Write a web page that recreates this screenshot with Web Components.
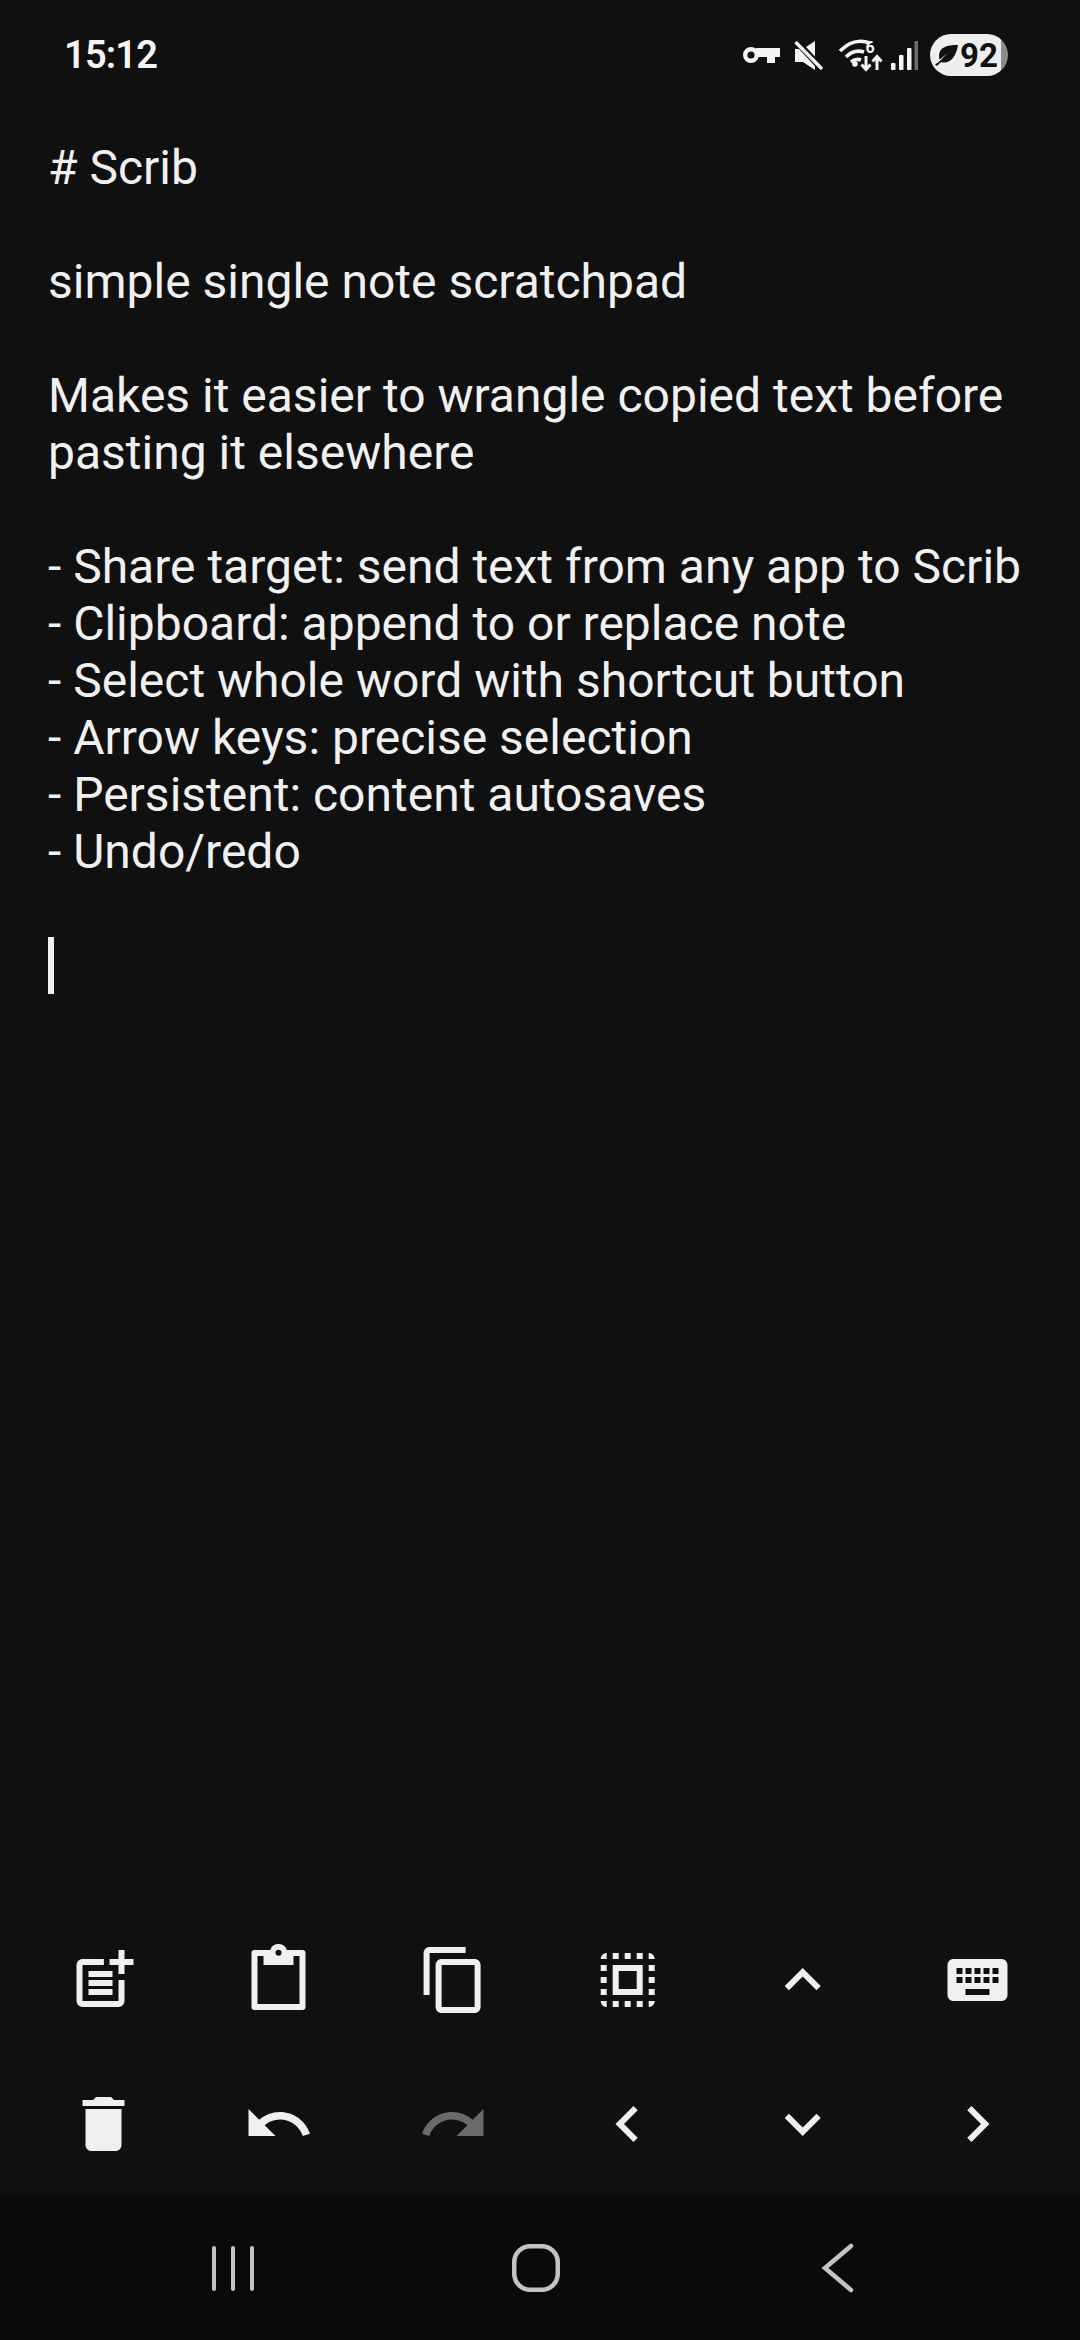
<!DOCTYPE html>
<html>
<head>
<meta charset="utf-8">
<style>
  html, body { margin: 0; padding: 0; background: #101010; }
  body { width: 1080px; height: 2340px; display: flex; flex-direction: column; overflow: hidden; font-family: Roboto, sans-serif; }
  note-text { flex: 1; }
</style>
</head>
<body>
<status-bar></status-bar>
<note-text>
<span># Scrib</span>
<span></span>
<span>simple single note scratchpad</span>
<span></span>
<span>Makes it easier to wrangle copied text before</span>
<span>pasting it elsewhere</span>
<span></span>
<span>- Share target: send text from any app to Scrib</span>
<span>- Clipboard: append to or replace note</span>
<span>- Select whole word with shortcut button</span>
<span>- Arrow keys: precise selection</span>
<span>- Persistent: content autosaves</span>
<span>- Undo/redo</span>
<span></span>
</note-text>
<tool-bar></tool-bar>
<nav-bar></nav-bar>

<script>
// icone della toolbar, viewBox 24x24
const ICONS = {
    add: '<path d="M12.3 5H5.17a2 2 0 0 0-2 2v12a2 2 0 0 0 2 2h12a2 2 0 0 0 2-2v-7h-2v7h-12V7h7.13z"/><path d="M7.17 9h8v2h-8zM7.17 12h8v2h-8zM7.17 15h8v2h-8zM17.17 2h2v3h3v2h-3v3h-2V7h-3V5h3z"/>',
    paste: '<path fill-rule="evenodd" d="M4.17 2H9.41a2.9 2.9 0 0 1 5.52 0H20.17a1 1 0 0 1 1 1V21a1 1 0 0 1-1 1H4.17a1 1 0 0 1-1-1V3a1 1 0 0 1 1-1zM5.17 4v16h14V4h-2v3h-10V4zM12.17 1.9a1 1 0 1 0 0 2 1 1 0 0 0 0-2z"/>',
    copy: '<path fill-rule="evenodd" transform="translate(.2 0)" d="M16 1H4c-1.1 0-2 .9-2 2v14h2V3h12zm3 4H8c-1.1 0-2 .9-2 2v14c0 1.1.9 2 2 2h11c1.1 0 2-.9 2-2V7c0-1.1-.9-2-2-2zm0 16H8V7h11z"/>',
    select: '<path fill-rule="evenodd" transform="translate(-.1 0)" d="M3 5h2V3c-1.1 0-2 .9-2 2zm0 8h2v-2H3zm4 8h2v-2H7zM3 9h2V7H3zm10-6h-2v2h2zm6 0v2h2c0-1.1-.9-2-2-2zM5 21v-2H3c0 1.1.9 2 2 2zm-2-4h2v-2H3zM9 3H7v2h2zm2 18h2v-2h-2zm8-8h2v-2h-2zm0 8c1.1 0 2-.9 2-2h-2zm0-12h2V7h-2zm0 8h2v-2h-2zm-4 4h2v-2h-2zm0-16h2V3h-2zM7 17h10V7H7zm2-8h6v6H9z"/>',
    up: '<path transform="translate(-.1 0)" d="M12 8l-6 6 1.41 1.41L12 10.83l4.59 4.58L18 14z"/>',
    keyboard: '<path fill-rule="evenodd" transform="translate(-.17 0)" d="M20 5H4c-1.1 0-2 .9-2 2v10c0 1.1.9 2 2 2h16c1.1 0 2-.9 2-2V7c0-1.1-.9-2-2-2zM11 8h2v2h-2zm0 3h2v2h-2zM8 8h2v2H8zm0 3h2v2H8zm-1 2H5v-2h2zm0-3H5V8h2zm9 7H8v-2h8zm0-4h-2v-2h2zm0-3h-2V8h2zm3 3h-2v-2h2zm0-3h-2V8h2z"/>',
    trash: '<path transform="translate(.17 0)" d="M6 19c0 1.1.9 2 2 2h8c1.1 0 2-.9 2-2V7H6v12zM19 4h-3.5l-1-1h-5l-1 1H5v2h14V4z"/>',
    undo: '<path transform="translate(.17 0)" d="M12.5 8c-2.65 0-5.05.99-6.9 2.6L2 7v9h9l-3.62-3.62c1.39-1.16 3.16-1.88 5.12-1.88 3.54 0 6.55 2.31 7.6 5.5l2.37-.78C21.08 11.03 17.15 8 12.5 8z"/>',
    redo: '<path transform="translate(.17 0)" d="M18.4 10.6C16.55 8.99 14.15 8 11.5 8c-4.65 0-8.58 3.03-9.96 7.22L3.9 16c1.05-3.19 4.05-5.5 7.6-5.5 1.95 0 3.73.72 5.12 1.88L13 16h9V7l-3.6 3.6z"/>',
    left: '<path transform="translate(-.17 0)" d="M15.41 7.41 14 6l-6 6 6 6 1.41-1.41L10.83 12z"/>',
    down: '<path transform="translate(-.1 0)" d="M16.59 8.59 12 13.17 7.41 8.59 6 10l6 6 6-6z"/>',
    right: '<path transform="translate(-.17 0)" d="M10 6 8.59 7.41 13.17 12l-4.58 4.59L10 18l6-6z"/>'
};

class StatusBar extends HTMLElement {
    constructor() {
        super();
        this.attachShadow({ mode: 'open' });
        this.shadowRoot.innerHTML = `
      <style>
        :host {
          display: flex;
          align-items: center;
          justify-content: space-between;
          height: 110px;
          padding: 0 72px 0 64px;
          color: #f4f4f4;
          font-family: Roboto, sans-serif;
        }
        .time {
          font-size: 38px;
          font-weight: 600;
          letter-spacing: -0.8px;
        }
        .icons {
          display: flex;
          align-items: center;
        }
        svg { display: block; fill: #f4f4f4; flex: none; }
        .mute { margin-left: 14px; }
        .wifi { margin-left: 15px; }
        .signal { margin-left: 7px; }
        .battery {
          display: flex;
          align-items: center;
          box-sizing: border-box;
          margin-left: 12px;
          padding-left: 5px;
          width: 78px;
          height: 42px;
          border-radius: 21px;
          background: linear-gradient(to right, #eeeeee 91%, #8c8c8c 91%);
          color: #101010;
          font-size: 33px;
          font-weight: 700;
        }
        .battery svg { fill: #101010; margin-right: 2px; }
      </style>
      <span class="time">15:12</span>
      <div class="icons">
        <svg width="37" height="16" viewBox="0 0 37 16"><path d="M13 1H37V10H32V16H24V10H13z"/><circle cx="8" cy="8" r="5.800" fill="#101010" stroke="#f4f4f4" stroke-width="4.400"/></svg>
        <svg class="mute" width="29" height="29" viewBox="0 0 29 29"><path d="M1 8H9L21 0V29L9 21H1z"/><path d="M2.500 .5 29 29" fill="none" stroke="#101010" stroke-width="6.500"/><path d="M1.500 1 28 28" fill="none" stroke="#f4f4f4" stroke-width="3.400"/></svg>
        <svg class="wifi" width="46" height="34" viewBox="0 0 46 34"><path d="M2 13Q16-1 32 5M8 19Q16 11 26 14M13 24Q18 20 23 22" fill="none" stroke="#f4f4f4" stroke-width="3.600"/><circle cx="17" cy="26" r="2.800"/><text x="27.500" y="15" font-size="16" font-weight="700" font-family="Roboto" fill="#f4f4f4">6</text><path d="M28 18V31M23.500 26.500 28 31.500 32.500 26.500M39 32V19M34.500 23.500 39 18.500 43.500 23.500" fill="none" stroke="#f4f4f4" stroke-width="3"/></svg>
        <svg class="signal" width="27" height="29" viewBox="0 0 27 29"><rect x="0" y="22" width="4.500" height="7" rx="1"/><rect x="8" y="14" width="4.500" height="15" rx="1"/><rect x="16" y="7" width="4.500" height="22" rx="1"/><rect x="23.500" y="0" width="3.500" height="29" fill="#6e6e6e"/></svg>
        <div class="battery">
          <svg width="23" height="21" viewBox="0 0 23 21"><path d="M23 0C12 0 4 2 4 11c0 1.500.3 2.500.8 3.500l8-6.500-9 9L0 19.500 2 21l4-4c8 2.500 15-4 17-17z"/></svg>
          <span>92</span>
        </div>
      </div>
    `;
    }
}

class NoteText extends HTMLElement {
    constructor() {
        super();
        this.attachShadow({ mode: 'open' });
        this.shadowRoot.innerHTML = `
      <style>
        :host {
          display: block;
          padding: 29px 30px 0 48px;
          color: #f0f0f0;
          font-family: Roboto, sans-serif;
          font-size: 48px;
          line-height: 57px;
        }
        .lines {
          display: flex;
          flex-direction: column;
        }
        ::slotted(span) {
          display: block;
          height: 57px;
          white-space: pre;
        }
        .caret {
          width: 6px;
          height: 57px;
          background: #f0f0f0;
        }
      </style>
      <div class="lines">
        <slot></slot>
        <div class="caret"></div>
      </div>
    `;
    }
}

class IconButton extends HTMLElement {
    static get observedAttributes() { return ['icon']; }
    constructor() {
        super();
        this.attachShadow({ mode: 'open' });
        this.shadowRoot.innerHTML = `
      <style>
        :host {
          display: flex;
          align-items: center;
          justify-content: center;
          height: 144px;
        }
        :host([disabled]) svg { fill: #6a6a6a; }
        svg { width: 72px; height: 72px; fill: #f0f0f0; display: block; }
      </style>
      <svg viewBox="0 0 24 24"></svg>
    `;
    }
    attributeChangedCallback() {
        this.shadowRoot.querySelector('svg').innerHTML = ICONS[this.getAttribute('icon')] || '';
    }
}

class ToolBar extends HTMLElement {
    constructor() {
        super();
        this.attachShadow({ mode: 'open' });
        this.shadowRoot.innerHTML = `
      <style>
        :host {
          display: grid;
          grid-template-columns: repeat(6, 175px);
          padding: 0 15px;
        }
      </style>
      <icon-button icon="add"></icon-button>
      <icon-button icon="paste"></icon-button>
      <icon-button icon="copy"></icon-button>
      <icon-button icon="select"></icon-button>
      <icon-button icon="up"></icon-button>
      <icon-button icon="keyboard"></icon-button>
      <icon-button icon="trash"></icon-button>
      <icon-button icon="undo"></icon-button>
      <icon-button icon="redo" disabled></icon-button>
      <icon-button icon="left"></icon-button>
      <icon-button icon="down"></icon-button>
      <icon-button icon="right"></icon-button>
    `;
    }
}

class NavBar extends HTMLElement {
    constructor() {
        super();
        this.attachShadow({ mode: 'open' });
        this.shadowRoot.innerHTML = `
      <style>
        :host {
          display: grid;
          grid-template-columns: repeat(3, 302.5px);
          padding-left: 82px;
          height: 144px;
          background: #0a0a0a;
          align-items: center;
          justify-items: center;
        }
        svg { display: block; fill: none; stroke: #c4c4c4; stroke-linecap: round; }
      </style>
      <svg width="42" height="50" viewBox="0 0 42 50" stroke-width="4"><path d="M2 5V46M21 5V46M40 5V46"/></svg>
      <svg width="50" height="50" viewBox="0 0 50 50" stroke-width="4.500"><rect x="3.250" y="3.250" width="43.500" height="43.500" rx="16"/></svg>
      <svg width="36" height="50" viewBox="0 0 36 50" stroke-width="4.500"><path d="M31 3 5 25 31 47"/></svg>
    `;
    }
}

customElements.define('status-bar', StatusBar);
customElements.define('note-text', NoteText);
customElements.define('icon-button', IconButton);
customElements.define('tool-bar', ToolBar);
customElements.define('nav-bar', NavBar);
</script>
</body>
</html>
